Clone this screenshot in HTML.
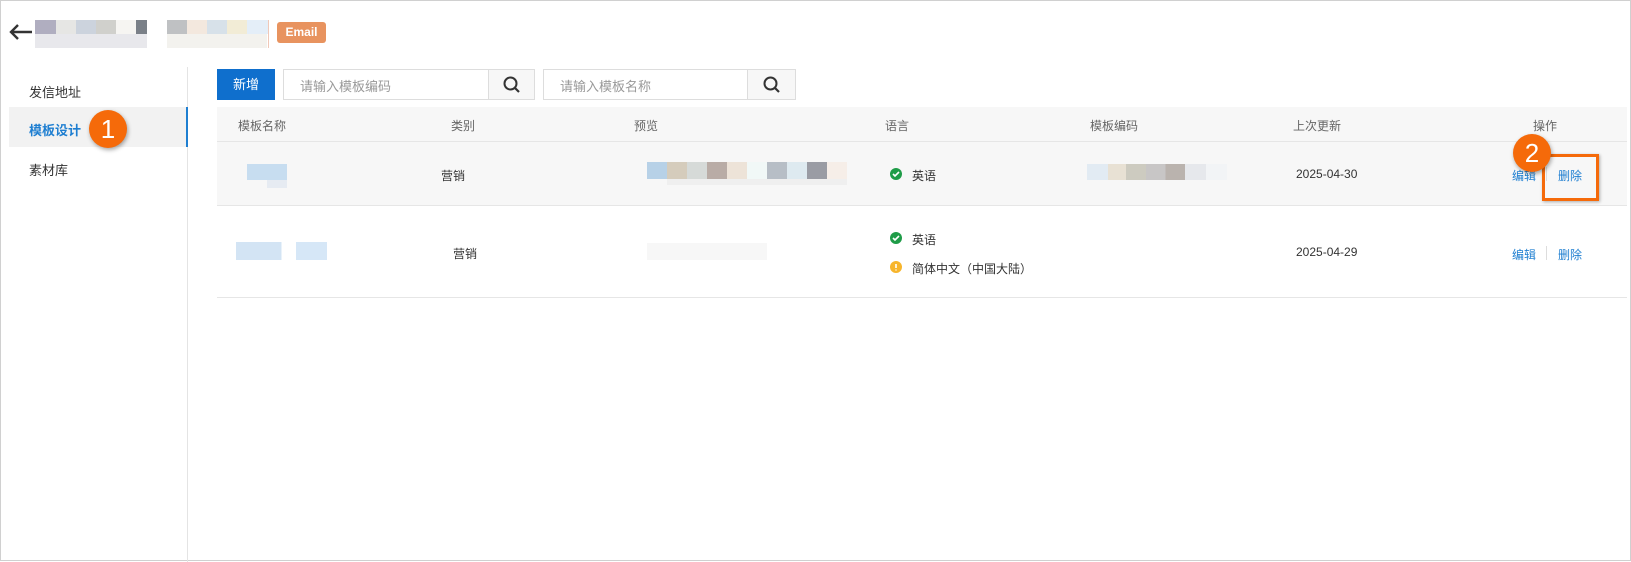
<!DOCTYPE html>
<html><head><meta charset="utf-8"><style>
*{box-sizing:border-box;margin:0;padding:0}
body{width:1631px;height:561px;background:#fff;font-family:"Liberation Sans","Noto Sans CJK SC",sans-serif;font-size:12px;color:#333;position:relative;overflow:hidden;border:1px solid #d0d0d0}
.a{position:absolute}
.px{position:absolute;height:14px}
.t{position:absolute;white-space:nowrap}
.circ{position:absolute;width:38px;height:38px;border-radius:50%;background:#f56a0a;color:#fff;font-size:26px;text-align:center;line-height:38px;box-shadow:1px 2px 4px rgba(0,0,0,.35)}
.hd{color:#666}
.lnk{color:#1f7fd1}
</style></head><body>
<svg class="a" style="left:7px;top:22px" width="26" height="18" viewBox="0 0 26 18"><path d="M24 9H3M10 2L3 9l7 7" stroke="#333" stroke-width="2.4" fill="none"/></svg>
<div class="px" style="left:34px;top:19px;width:21px;background:#b0aec0"></div>
<div class="px" style="left:55px;top:19px;width:20px;background:#e6e6e4"></div>
<div class="px" style="left:75px;top:19px;width:20px;background:#ccd3dd"></div>
<div class="px" style="left:95px;top:19px;width:20px;background:#d0d0cc"></div>
<div class="px" style="left:115px;top:19px;width:20px;background:#f6f5f2"></div>
<div class="px" style="left:135px;top:19px;width:11px;background:#7a8088"></div>
<div class="px" style="left:34px;top:33px;width:112px;height:14px;background:#e8e8ec"></div>
<div class="px" style="left:166px;top:19px;width:20px;background:#bfc1c3"></div>
<div class="px" style="left:186px;top:19px;width:20px;background:#f3e8de"></div>
<div class="px" style="left:206px;top:19px;width:20px;background:#d7e1e9"></div>
<div class="px" style="left:226px;top:19px;width:20px;background:#f2ecd6"></div>
<div class="px" style="left:246px;top:19px;width:21px;background:#e4eef8"></div>
<div class="px" style="left:166px;top:33px;width:100px;background:#f3f2ee"></div>
<div class="a" style="left:267px;top:19px;width:1px;height:28px;background:#f0c8b8"></div>
<div class="a" style="left:276px;top:21px;width:49px;height:21px;background:#e8935f;border-radius:3px;color:#fff;font-weight:bold;font-size:12px;text-align:center;line-height:21px">Email</div>

<div class="a" style="left:186px;top:66px;width:1px;height:495px;background:#e4e4e4"></div>
<div class="t" style="left:28px;top:81px;font-size:13px">发信地址</div>
<div class="a" style="left:8px;top:106px;width:179px;height:40px;background:#f2f2f2;border-right:2px solid #1f7fd1"></div>
<div class="t" style="left:28px;top:119px;font-size:13px;color:#1f7fd1;font-weight:bold">模板设计</div>
<div class="circ" style="left:88px;top:109px">1</div>
<div class="t" style="left:28px;top:159px;font-size:13px">素材库</div>

<div class="a" style="left:216px;top:68px;width:58px;height:31px;background:#0f6fcd;color:#fff;font-size:13px;text-align:center;line-height:31px">新增</div>
<div class="a" style="left:282px;top:68px;width:252px;height:31px;border:1px solid #ddd"></div>
<div class="t" style="left:299px;top:75px;font-size:13px;color:#999">请输入模板编码</div>
<div class="a" style="left:487px;top:68px;width:47px;height:31px;border:1px solid #ddd;background:#f7f7f7"></div>
<svg class="a" style="left:501px;top:74px" width="20" height="20" viewBox="0 0 20 20"><circle cx="8.5" cy="8.5" r="6" stroke="#333" stroke-width="2" fill="none"/><path d="M13 13l4 4" stroke="#333" stroke-width="2.2"/></svg>
<div class="a" style="left:542px;top:68px;width:253px;height:31px;border:1px solid #ddd"></div>
<div class="t" style="left:559px;top:75px;font-size:13px;color:#999">请输入模板名称</div>
<div class="a" style="left:746px;top:68px;width:49px;height:31px;border:1px solid #ddd;background:#f7f7f7"></div>
<svg class="a" style="left:761px;top:74px" width="20" height="20" viewBox="0 0 20 20"><circle cx="8.5" cy="8.5" r="6" stroke="#333" stroke-width="2" fill="none"/><path d="M13 13l4 4" stroke="#333" stroke-width="2.2"/></svg>

<div class="a" style="left:216px;top:106px;width:1410px;height:35px;background:#f7f7f7;border-bottom:1px solid #e6e6e6"></div>
<div class="t hd" style="left:237px;top:116px">模板名称</div>
<div class="t hd" style="left:450px;top:116px">类别</div>
<div class="t hd" style="left:633px;top:116px">预览</div>
<div class="t hd" style="left:884px;top:116px">语言</div>
<div class="t hd" style="left:1089px;top:116px">模板编码</div>
<div class="t hd" style="left:1292px;top:116px">上次更新</div>
<div class="t hd" style="left:1532px;top:116px">操作</div>

<div class="a" style="left:216px;top:141px;width:1410px;height:64px;background:#f7f7f7;border-bottom:1px solid #e6e6e6"></div>
<div class="px" style="left:246px;top:163px;width:40px;height:16px;background:#c7ddf0"></div>
<div class="px" style="left:266px;top:179px;width:20px;height:8px;background:#e6ebf2"></div>
<div class="t" style="left:440px;top:166px">营销</div>
<div class="a" style="left:646px;top:161px;width:200px;height:17px;background:linear-gradient(90deg,#b7d1e7 0 10%,#d5ccbc 10% 20%,#d6dad8 20% 30%,#b9aca6 30% 40%,#ede3d8 40% 50%,#f1f8f7 50% 60%,#b7bec6 60% 70%,#deeaf0 70% 80%,#9a9ca4 80% 90%,#f6eee8 90%)"></div>
<div class="a" style="left:666px;top:178px;width:180px;height:6px;background:#efefef"></div>
<svg class="a" style="left:889px;top:167px" width="12" height="12"><circle cx="6" cy="6" r="6" fill="#1f9c48"/><path d="M3 6l2 2 4-4" stroke="#fff" stroke-width="1.6" fill="none"/></svg>
<div class="t" style="left:911px;top:166px">英语</div>
<div class="a" style="left:1086px;top:163px;width:140px;height:16px;background:linear-gradient(90deg,#e2ebf3 0 15%,#e8e1d4 15% 28%,#cdcbc0 28% 42%,#c8c6c6 42% 56%,#bab3ae 56% 70%,#e6e8ec 70% 85%,#f2f4f6 85%)"></div>
<div class="t" style="left:1295px;top:166px">2025-04-30</div>
<div class="t lnk" style="left:1511px;top:166px">编辑</div>
<div class="a" style="left:1545px;top:166px;width:1px;height:14px;background:#ddd"></div>
<div class="t lnk" style="left:1557px;top:166px">删除</div>
<div class="a" style="left:1541px;top:153px;width:57px;height:47px;border:3px solid #f56a0a;box-shadow:1px 1px 3px rgba(0,0,0,.3)"></div>
<div class="circ" style="left:1512px;top:133px">2</div>

<div class="a" style="left:216px;top:205px;width:1410px;height:92px;border-bottom:1px solid #e6e6e6"></div>
<div class="px" style="left:235px;top:241px;width:91px;height:18px;background:linear-gradient(90deg,#d3e4f4 0 50%,#fff 50% 66%,#d6e7f7 66%)"></div>
<div class="t" style="left:452px;top:244px">营销</div>
<div class="a" style="left:646px;top:242px;width:120px;height:17px;background:#f7f7f7"></div>
<svg class="a" style="left:889px;top:231px" width="12" height="12"><circle cx="6" cy="6" r="6" fill="#1f9c48"/><path d="M3 6l2 2 4-4" stroke="#fff" stroke-width="1.6" fill="none"/></svg>
<div class="t" style="left:911px;top:230px">英语</div>
<svg class="a" style="left:889px;top:260px" width="12" height="12"><circle cx="6" cy="6" r="6" fill="#f7b52c"/><path d="M6 3v4M6 8.5v1" stroke="#fff" stroke-width="1.6"/></svg>
<div class="t" style="left:911px;top:259px">简体中文（中国大陆）</div>
<div class="t" style="left:1295px;top:244px">2025-04-29</div>
<div class="t lnk" style="left:1511px;top:245px">编辑</div>
<div class="a" style="left:1545px;top:245px;width:1px;height:14px;background:#ddd"></div>
<div class="t lnk" style="left:1557px;top:245px">删除</div>
</body></html>
